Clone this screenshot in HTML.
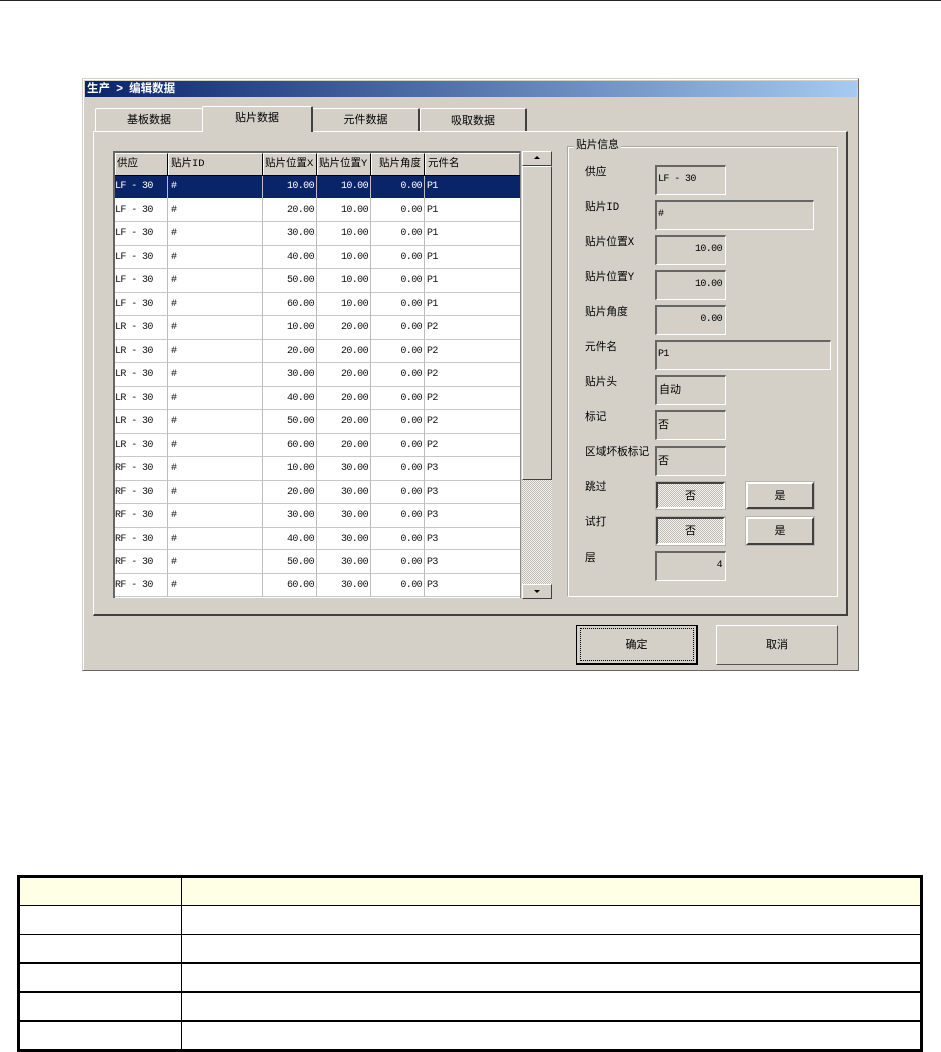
<!DOCTYPE html>
<html><head><meta charset="utf-8">
<style>
html,body{margin:0;padding:0;background:#fff;width:941px;height:1052px;overflow:hidden}
body{position:relative;font:11px "Liberation Sans","WenQuanYi Zen Hei","Noto Sans CJK SC",sans-serif;color:#000}
div{position:absolute;box-sizing:border-box;white-space:nowrap}
.m{font-family:"Liberation Mono","WenQuanYi Zen Hei","Noto Sans CJK SC",monospace;font-size:10px;letter-spacing:-.6px}
.tab{background:#d4d0c8;border:1px solid #fff;border-bottom:0;border-right:2px solid #404040;border-radius:2px 2px 0 0;text-align:center;line-height:22px;font-size:11px}
.hc{top:153px;height:22px;line-height:21px;font-family:"Liberation Mono","WenQuanYi Zen Hei","Noto Sans CJK SC",monospace;font-size:10.5px;background:#d4d0c8;border-right:1px solid #000;padding-left:1px;overflow:hidden;border-top:1px solid #fff;border-left:1px solid #fff}
.r{left:115px;width:405px;height:22px;color:#111}
.r.s{background:#0a246a;color:#fff}
.r div{top:0;line-height:21px}
.a{left:0}.b{left:56px}.c{right:206px;text-align:right}.d{right:152px;text-align:right}.e{right:98px;text-align:right}.f{left:312px}
.v{top:176px;height:421px;width:1px;background:#bdbdbd}
.h{left:115px;width:405px;height:1px;background:#c8c8c8}
.f1{left:655px;width:71px;height:30px;background:#d4d0c8;border:2px solid #fff;border-top-color:#666;border-left-color:#666;border-right-width:1px;border-bottom-width:1px;line-height:26px;padding-left:1px;overflow:hidden}
.n{text-align:right;padding:0 3px 0 0}
.l{left:585px;font-family:"Liberation Mono","WenQuanYi Zen Hei","Noto Sans CJK SC",monospace;font-size:10.7px;line-height:14px}
.btn{background:#d4d0c8;border:2px solid;border-color:#fff #404040 #404040 #fff;box-shadow:0 0 0 1px #b8b5ad;text-align:center;font-size:11px}
.hat{background-color:#d4d0c8;background-image:repeating-conic-gradient(#bdbab3 0 25%,#f4f3f0 0 50%);background-size:2px 2px}
.tb{background:#000}
</style></head><body>
<div style="left:0;top:0;width:941px;height:1px;background:#222"></div>

<!-- window -->
<div style="left:82px;top:78px;width:777px;height:593px;background:#d4d0c8;border:1px solid;border-color:#d4d0c8 #666 #666 #d4d0c8;box-shadow:inset 1px 1px 0 #fff"></div>
<div style="left:85px;top:81px;width:772px;height:16px;background:linear-gradient(90deg,#0a246a,#a6caf0);color:#fff;font-size:11.5px;font-weight:bold;line-height:16px;padding-left:2px;word-spacing:3px">生产 &gt; 编辑数据</div>

<!-- pane -->
<div style="left:93px;top:131px;width:755px;height:485px;background:#d4d0c8;border:1px solid #fff;border-right:2px solid #404040;border-bottom:2px solid #404040"></div>

<!-- tabs -->
<div class="tab" style="left:95px;top:108px;width:107px;height:23px;border-right:0">基板数据</div>
<div class="tab" style="left:312px;top:108px;width:108px;height:23px;line-height:23px">元件数据</div>
<div class="tab" style="left:420px;top:108px;width:107px;height:23px;line-height:24px">吸取数据</div>
<div class="tab" style="left:202px;top:106px;width:111px;height:26px;line-height:23px;z-index:2">贴片数据</div>

<!-- grid -->
<div style="left:113px;top:151px;width:408px;height:447px;background:#fff;border-top:2px solid #666;border-left:2px solid #666"></div>
<div class="hc" style="left:115px;width:53px">供应</div>
<div class="hc" style="left:168px;width:95px;padding-left:2px">贴片ID</div>
<div class="hc" style="left:263px;width:54px">贴片位置X</div>
<div class="hc" style="left:317px;width:54px">贴片位置Y</div>
<div class="hc" style="left:371px;width:54px;padding-left:7px">贴片角度</div>
<div class="hc" style="left:425px;width:95px;border-right:1px solid #666;padding-left:2px">元件名</div>
<div style="left:115px;top:175px;width:405px;height:1px;background:#000"></div>

<div class="r s m" style="top:176px"><div class="a">LF - 30</div><div class="b">#</div><div class="c">10.00</div><div class="d">10.00</div><div class="e">0.00</div><div class="f">P1</div></div>
<div class="r m" style="top:200px"><div class="a">LF - 30</div><div class="b">#</div><div class="c">20.00</div><div class="d">10.00</div><div class="e">0.00</div><div class="f">P1</div></div>
<div class="r m" style="top:223px"><div class="a">LF - 30</div><div class="b">#</div><div class="c">30.00</div><div class="d">10.00</div><div class="e">0.00</div><div class="f">P1</div></div>
<div class="r m" style="top:247px"><div class="a">LF - 30</div><div class="b">#</div><div class="c">40.00</div><div class="d">10.00</div><div class="e">0.00</div><div class="f">P1</div></div>
<div class="r m" style="top:270px"><div class="a">LF - 30</div><div class="b">#</div><div class="c">50.00</div><div class="d">10.00</div><div class="e">0.00</div><div class="f">P1</div></div>
<div class="r m" style="top:294px"><div class="a">LF - 30</div><div class="b">#</div><div class="c">60.00</div><div class="d">10.00</div><div class="e">0.00</div><div class="f">P1</div></div>
<div class="r m" style="top:317px"><div class="a">LR - 30</div><div class="b">#</div><div class="c">10.00</div><div class="d">20.00</div><div class="e">0.00</div><div class="f">P2</div></div>
<div class="r m" style="top:341px"><div class="a">LR - 30</div><div class="b">#</div><div class="c">20.00</div><div class="d">20.00</div><div class="e">0.00</div><div class="f">P2</div></div>
<div class="r m" style="top:364px"><div class="a">LR - 30</div><div class="b">#</div><div class="c">30.00</div><div class="d">20.00</div><div class="e">0.00</div><div class="f">P2</div></div>
<div class="r m" style="top:388px"><div class="a">LR - 30</div><div class="b">#</div><div class="c">40.00</div><div class="d">20.00</div><div class="e">0.00</div><div class="f">P2</div></div>
<div class="r m" style="top:411px"><div class="a">LR - 30</div><div class="b">#</div><div class="c">50.00</div><div class="d">20.00</div><div class="e">0.00</div><div class="f">P2</div></div>
<div class="r m" style="top:435px"><div class="a">LR - 30</div><div class="b">#</div><div class="c">60.00</div><div class="d">20.00</div><div class="e">0.00</div><div class="f">P2</div></div>
<div class="r m" style="top:458px"><div class="a">RF - 30</div><div class="b">#</div><div class="c">10.00</div><div class="d">30.00</div><div class="e">0.00</div><div class="f">P3</div></div>
<div class="r m" style="top:482px"><div class="a">RF - 30</div><div class="b">#</div><div class="c">20.00</div><div class="d">30.00</div><div class="e">0.00</div><div class="f">P3</div></div>
<div class="r m" style="top:505px"><div class="a">RF - 30</div><div class="b">#</div><div class="c">30.00</div><div class="d">30.00</div><div class="e">0.00</div><div class="f">P3</div></div>
<div class="r m" style="top:529px"><div class="a">RF - 30</div><div class="b">#</div><div class="c">40.00</div><div class="d">30.00</div><div class="e">0.00</div><div class="f">P3</div></div>
<div class="r m" style="top:552px"><div class="a">RF - 30</div><div class="b">#</div><div class="c">50.00</div><div class="d">30.00</div><div class="e">0.00</div><div class="f">P3</div></div>
<div class="r m" style="top:575px"><div class="a">RF - 30</div><div class="b">#</div><div class="c">60.00</div><div class="d">30.00</div><div class="e">0.00</div><div class="f">P3</div></div>

<div class="h" style="top:221px"></div>
<div class="h" style="top:245px"></div>
<div class="h" style="top:268px"></div>
<div class="h" style="top:292px"></div>
<div class="h" style="top:315px"></div>
<div class="h" style="top:339px"></div>
<div class="h" style="top:362px"></div>
<div class="h" style="top:386px"></div>
<div class="h" style="top:409px"></div>
<div class="h" style="top:433px"></div>
<div class="h" style="top:456px"></div>
<div class="h" style="top:480px"></div>
<div class="h" style="top:503px"></div>
<div class="h" style="top:527px"></div>
<div class="h" style="top:549px"></div>
<div class="h" style="top:573px"></div>
<div class="h" style="top:596px"></div>

<div class="v" style="left:167px"></div>
<div class="v" style="left:262px"></div>
<div class="v" style="left:316px"></div>
<div class="v" style="left:370px"></div>
<div class="v" style="left:424px"></div>
<div style="left:520px;top:151px;width:1px;height:447px;background:#8a8a8a"></div>

<!-- scrollbar -->
<div class="hat" style="left:522px;top:151px;width:30px;height:447px"></div>
<div class="btn" style="left:522px;top:151px;width:30px;height:15px;box-shadow:none;border-width:1px;border-color:#fff #404040 #404040 #fff"></div>
<div style="left:534px;top:156px;width:0;height:0;border:3px solid transparent;border-top:0;border-bottom:3px solid #000"></div>
<div class="btn" style="left:522px;top:166px;width:30px;height:314px;box-shadow:none;border-width:1px;border-color:#fff #404040 #404040 #fff"></div>
<div class="btn" style="left:522px;top:584px;width:30px;height:15px;box-shadow:none;border-width:1px;border-color:#fff #404040 #404040 #fff"></div>
<div style="left:534px;top:590px;width:0;height:0;border:3px solid transparent;border-bottom:0;border-top:3px solid #000"></div>

<!-- group -->
<div style="left:568px;top:147px;width:270px;height:450px;border:1px solid #fff;box-shadow:-1px -1px 0 #aaa7a0"></div>
<div style="left:574px;top:138px;padding:0 2px;background:#d4d0c8;line-height:15px;font-size:10.7px">贴片信息</div>

<div class="l" style="top:166px">供应</div>
<div class="l" style="top:201px">贴片ID</div>
<div class="l" style="top:236px">贴片位置X</div>
<div class="l" style="top:271px">贴片位置Y</div>
<div class="l" style="top:306px">贴片角度</div>
<div class="l" style="top:341px">元件名</div>
<div class="l" style="top:376px">贴片头</div>
<div class="l" style="top:411px">标记</div>
<div class="l" style="top:446px">区域坏板标记</div>
<div class="l" style="top:481px">跳过</div>
<div class="l" style="top:516px">试打</div>
<div class="l" style="top:552px">层</div>

<div class="f1 m" style="top:165px">LF - 30</div>
<div class="f1 m" style="top:200px;width:159px">#</div>
<div class="f1 m n" style="top:235px">10.00</div>
<div class="f1 m n" style="top:270px">10.00</div>
<div class="f1 m n" style="top:305px">0.00</div>
<div class="f1 m" style="top:340px;width:176px">P1</div>
<div class="f1" style="top:375px;padding-left:2px">自动</div>
<div class="f1" style="top:410px">否</div>
<div class="f1" style="top:446px">否</div>
<div class="f1 m n" style="top:551px">4</div>

<div class="btn hat" style="left:656px;top:482px;width:69px;height:27px;line-height:25px;border-color:#404040 #fff #fff #404040">否</div>
<div class="btn hat" style="left:656px;top:517px;width:69px;height:28px;line-height:24px;border-color:#404040 #fff #fff #404040">否</div>
<div class="btn" style="left:746px;top:482px;width:68px;height:27px;line-height:25px">是</div>
<div class="btn" style="left:746px;top:517px;width:68px;height:28px;line-height:24px">是</div>

<div style="left:576px;top:625px;width:122px;height:40px;background:#d4d0c8;border:1px solid #000;border-right-width:2px;border-bottom-width:2px;text-align:center;line-height:38px">确定</div>
<div style="left:580px;top:628px;width:114px;height:33px;border:1px dotted #000"></div>
<div style="left:716px;top:625px;width:122px;height:40px;background:#d4d0c8;border:1px solid;border-color:#fff #555 #555 #fff;text-align:center;line-height:38px">取消</div>

<!-- bottom table -->
<div class="tb" style="left:17px;top:875px;width:906px;height:177px"></div>
<div style="left:20px;top:878px;width:161px;height:27px;background:#ffffe6"></div>
<div style="left:182px;top:878px;width:738px;height:27px;background:#ffffe6"></div>
<div style="left:20px;top:906px;width:161px;height:28px;background:#fff"></div>
<div style="left:182px;top:906px;width:738px;height:28px;background:#fff"></div>
<div style="left:20px;top:935px;width:161px;height:27px;background:#fff"></div>
<div style="left:182px;top:935px;width:738px;height:27px;background:#fff"></div>
<div style="left:20px;top:964px;width:161px;height:27px;background:#fff"></div>
<div style="left:182px;top:964px;width:738px;height:27px;background:#fff"></div>
<div style="left:20px;top:993px;width:161px;height:27px;background:#fff"></div>
<div style="left:182px;top:993px;width:738px;height:27px;background:#fff"></div>
<div style="left:20px;top:1022px;width:161px;height:27px;background:#fff"></div>
<div style="left:182px;top:1022px;width:738px;height:27px;background:#fff"></div>
</body></html>
